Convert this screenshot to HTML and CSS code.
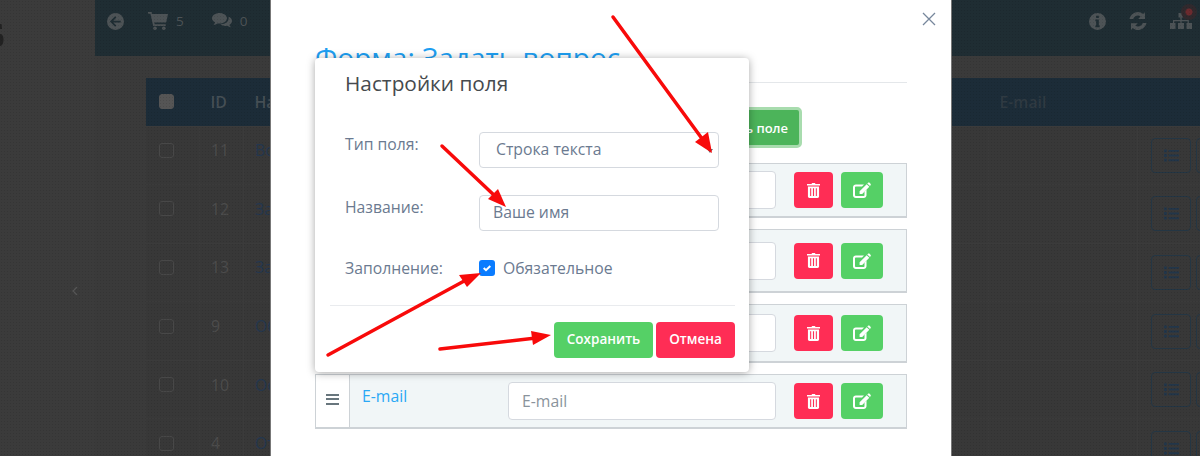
FILE: index.html
```html
<!DOCTYPE html>
<html lang="en">
<head>
  <meta charset="UTF-8">
  <meta name="viewport" content="width=device-width, initial-scale=1.0">
  <title>Форма: Задать вопрос</title>
  <link rel="stylesheet" href="styles.css">
</head>
<body>
  <svg class="defs" width="0" height="0">
    <symbol id="i-trash" viewBox="0 0 14 16">
      <path d="M4.800 1 5.500 0h3l.7 1H14v1.600H0V1zM1 3.600h12v10.800c0 .9-.7 1.600-1.600 1.600H2.600C1.700 16 1 15.300 1 14.400zM3.400 5.600v8.400h1.100V5.600zm3 0v8.400h1.200V5.600zm3.100 0v8.400h1.100V5.600z" fill-rule="evenodd"/>
    </symbol>
    <symbol id="i-edit" viewBox="0 0 18 16">
      <path d="M2.800 2.500h8.200L9 4.500H2.800c-.5 0-.8.300-.8.800v7.900c0 .5.300.8.800.8h7.900c.5 0 .8-.3.800-.8V9.500l2-2v5.700c0 1.500-1.300 2.800-2.800 2.800H2.800C1.300 16 0 14.700 0 13.200V5.300C0 3.800 1.300 2.500 2.800 2.500z"/>
      <path d="M13.700 2.200 16.300 4.800 9.200 11.900H6.600V9.300zM15 .8c.5-.5 1.100-.5 1.600 0l.9.900c.5.500.5 1.100 0 1.600l-.5.800-2.700-2.700z"/>
    </symbol>
    <symbol id="i-list" viewBox="0 0 16 13">
      <path d="M0 0h3v3H0zM5 .5h11v2H5zM0 5h3v3H0zM5 5.500h11v2H5zM0 10h3v3H0zM5 10.500h11v2H5z"/>
    </symbol>
  </svg>

  <div class="page">
    <aside class="sidebar">
      <svg class="sidebar-logo" viewBox="0 0 4 22" width="4" height="22"><path d="M0 0h1.500L2 5H0zM0 10c2.500 0 3.500 2.500 3.500 5.500S2.500 22 0 22z" fill="#222"/></svg>
      <svg class="sidebar-toggle" viewBox="0 0 6 10" width="6" height="10"><path d="M5 1 1 5l4 4" fill="none" stroke="#555" stroke-width="1.300"/></svg>
    </aside>
    <main class="main">
      <header class="topbar">
        <div class="topbar-group">
          <svg class="top-icon" viewBox="0 0 18 18" width="17" height="17"><path fill-rule="evenodd" d="M9 0a9 9 0 1 1 0 18A9 9 0 0 1 9 0zm-.4 3.500L3.100 9l5.500 5.500 1.300-1.300-3.200-3.200h7.800V8.100H6.700l3.200-3.300z"/></svg>
          <span class="top-item">
            <svg class="top-icon" viewBox="0 0 20 18" width="20" height="18"><path d="M0 0h3.600l.6 2H20l-1.800 8.500H6.300l.4 1.800h11v1.700H5.200L2.400 1.800H0z"/><circle cx="7" cy="16.200" r="1.800"/><circle cx="15.800" cy="16.200" r="1.800"/></svg>
            <span class="top-count">5</span>
          </span>
          <span class="top-item">
            <svg class="top-icon" viewBox="0 0 20 16" width="20" height="16"><path d="M7.500 0C11.600 0 15 2.400 15 5.300s-3.400 5.300-7.500 5.300c-.7 0-1.400-.1-2-.2C4.400 11.200 3 11.800 1.500 12c.7-.8 1.300-1.700 1.500-2.700C1.200 8.300 0 6.900 0 5.300 0 2.400 3.400 0 7.500 0z"/><path d="M16.300 3.600C18.500 4.500 20 6.100 20 8c0 1.500-.9 2.800-2.500 3.700.2 1 .8 1.800 1.400 2.500-1.300-.2-2.500-.7-3.500-1.500-.6.100-1.200.2-1.900.2-2 0-3.800-.7-5-1.700 4.700.2 8.800-2.200 8.100-7.600z"/></svg>
            <span class="top-count">0</span>
          </span>
        </div>
        <div class="topbar-group topbar-right">
          <svg class="top-icon" viewBox="0 0 18 18" width="17" height="17"><path fill-rule="evenodd" d="M9 0a9 9 0 1 1 0 18A9 9 0 0 1 9 0zM7.600 2.800v2.600h2.800V2.800zM6.700 7v1.700h.9v4.500h-.9V15h4.600v-1.800h-.9V7z"/></svg>
          <svg class="top-icon" viewBox="0 0 18 18" width="18" height="18"><path d="M9 0c2 0 3.800.8 5.100 2L16 .2V7h-6.800l2.300-2.400C10.700 3.900 9.900 3.500 9 3.500 6.900 3.500 5 4.800 4.200 7H.5C1.400 3 4.900 0 9 0zM2 18v-6.800h6.800l-2.300 2.400c.8.700 1.600 1 2.500 1 2.100 0 4-1.300 4.800-3.500h3.700c-.9 4-4.400 7-8.500 7-2 0-3.800-.8-5.100-2z"/></svg>
          <span class="notify">
            <svg class="top-icon" viewBox="0 0 22 16" width="22" height="16"><path d="M8.500 0h5v4.500H11.700V7h7.100v3H22v6h-5.500v-6h1.100V8.300h-6v1.700H14v6H8v-6h2.300V8.300h-6V10h1.200v6H0v-6h3V7h7.300V4.500H8.500z"/></svg>
            <span class="notify-dot"></span>
          </span>
        </div>
      </header>
      <table class="grid">
        <thead>
          <tr>
            <th class="col-check"><span class="box box-head"></span></th>
            <th class="col-id">ID</th>
            <th class="col-name">Название</th>
            <th class="col-mail">E-mail</th>
            <th></th>
          </tr>
        </thead>
        <tbody>
          <tr><td><span class="box"></span></td><td>11</td><td class="link">Вопрос</td><td></td><td class="cell-actions"><span class="btn-pair"><span class="btn-outline"><svg class="list-icon"><use href="#i-list"/></svg></span><span class="btn-outline"></span></span></td></tr>
          <tr><td><span class="box"></span></td><td>12</td><td class="link">Заказ</td><td></td><td class="cell-actions"><span class="btn-pair"><span class="btn-outline"><svg class="list-icon"><use href="#i-list"/></svg></span><span class="btn-outline"></span></span></td></tr>
          <tr><td><span class="box"></span></td><td>13</td><td class="link">Заявка</td><td></td><td class="cell-actions"><span class="btn-pair"><span class="btn-outline"><svg class="list-icon"><use href="#i-list"/></svg></span><span class="btn-outline"></span></span></td></tr>
          <tr><td><span class="box"></span></td><td>9</td><td class="link">Обзор</td><td></td><td class="cell-actions"><span class="btn-pair"><span class="btn-outline"><svg class="list-icon"><use href="#i-list"/></svg></span><span class="btn-outline"></span></span></td></tr>
          <tr><td><span class="box"></span></td><td>10</td><td class="link">Оставить</td><td></td><td class="cell-actions"><span class="btn-pair"><span class="btn-outline"><svg class="list-icon"><use href="#i-list"/></svg></span><span class="btn-outline"></span></span></td></tr>
          <tr><td><span class="box"></span></td><td>4</td><td class="link">Отклик</td><td></td><td class="cell-actions"><span class="btn-pair"><span class="btn-outline"><svg class="list-icon"><use href="#i-list"/></svg></span><span class="btn-outline"></span></span></td></tr>
        </tbody>
      </table>
    </main>
  </div>
  <div class="backdrop"></div>

  <section class="modal">
    <svg class="modal-close" viewBox="0 0 14 14" width="14" height="14"><path d="M1 1l12 12M13 1 1 13" fill="none" stroke="#77879c" stroke-width="1.300"/></svg>
    <h1 class="modal-title">Форма: Задать вопрос</h1>
    <div class="modal-toolbar">
      <button class="btn-add">Добавить поле</button>
    </div>
    <div class="fields">
      <div class="field field-a">
        <span class="field-handle"><span class="bars"></span></span>
        <span class="field-name">Ваше имя</span>
        <input class="field-input" placeholder="Ваше имя">
        <span class="field-actions">
          <span class="btn-icon btn-red"><svg class="trash"><use href="#i-trash"/></svg></span>
          <span class="btn-icon btn-green"><svg class="pen"><use href="#i-edit"/></svg></span>
        </span>
      </div>
      <div class="field field-b">
        <span class="field-handle"><span class="bars"></span></span>
        <span class="field-name">Телефон</span>
        <input class="field-input" placeholder="Телефон">
        <span class="field-actions">
          <span class="btn-icon btn-red"><svg class="trash"><use href="#i-trash"/></svg></span>
          <span class="btn-icon btn-green"><svg class="pen"><use href="#i-edit"/></svg></span>
        </span>
      </div>
      <div class="field field-c">
        <span class="field-handle"><span class="bars"></span></span>
        <span class="field-name">Вопрос</span>
        <input class="field-input" placeholder="Вопрос">
        <span class="field-actions">
          <span class="btn-icon btn-red"><svg class="trash"><use href="#i-trash"/></svg></span>
          <span class="btn-icon btn-green"><svg class="pen"><use href="#i-edit"/></svg></span>
        </span>
      </div>
      <div class="field field-a">
        <span class="field-handle"><span class="bars"></span></span>
        <span class="field-name">E-mail</span>
        <input class="field-input" placeholder="E-mail">
        <span class="field-actions">
          <span class="btn-icon btn-red"><svg class="trash"><use href="#i-trash"/></svg></span>
          <span class="btn-icon btn-green"><svg class="pen"><use href="#i-edit"/></svg></span>
        </span>
      </div>
    </div>
  </section>

  <section class="dialog">
    <h2 class="dialog-title">Настройки поля</h2>
    <div class="dialog-body">
      <div class="dialog-row">
        <label class="dialog-label">Тип поля:</label>
        <div class="select">Строка текста<span class="select-caret"></span></div>
      </div>
      <div class="dialog-row">
        <label class="dialog-label">Название:</label>
        <input class="dialog-input" value="Ваше имя">
      </div>
      <div class="dialog-row dialog-row-check">
        <label class="dialog-label">Заполнение:</label>
        <span class="check">
          <svg viewBox="0 0 16 16" width="16" height="16"><rect width="16" height="16" rx="3" fill="#0a7cff"/><path d="M4.700 8 7 10.200 11.300 6" fill="none" stroke="#fff" stroke-width="2"/></svg>
          Обязательное
        </span>
      </div>
    </div>
    <div class="dialog-footer">
      <button class="btn btn-save">Сохранить</button>
      <button class="btn btn-cancel">Отмена</button>
    </div>
  </section>

  <!-- arrows drawn over the screenshot -->
  <svg class="arrows" viewBox="0 0 1200 456" width="1200" height="456">
    <g fill="none" stroke="#f80a0a" stroke-width="3.500" stroke-linecap="round">
      <path d="M613 17 703 140"/>
      <path d="M442 146 496 197"/>
      <path d="M328 355 466 280"/>
      <path d="M440 349 536 338"/>
    </g>
    <g fill="#f80a0a">
      <path d="M712 153 695 142 708 132z"/>
      <path d="M506 207 488 199 498 189z"/>
      <path d="M481 273 467 287 459 275z"/>
      <path d="M551 335 533 345 531 331z"/>
    </g>
  </svg>
</body>
</html>
```

FILE: styles.css
```css
* {
  box-sizing: border-box;
}

body {
  margin: 0;
  width: 1200px;
  height: 456px;
  overflow: hidden;
  position: relative;
  font-family: "Open Sans", sans-serif;
  background: #3a3a3a;
}

.defs {
  position: absolute;
}

.page {
  display: flex;
  height: 456px;
  overflow: hidden;
}

/* dimmed page behind the modal */
.sidebar {
  width: 95px;
  flex: none;
  background: #3b3b3b;
  padding-top: 286px;
  padding-left: 72px;
  position: relative;
}
.sidebar-logo {
  position: absolute;
  left: 0;
  top: 24px;
}
.sidebar-toggle {
  display: block;
}
.main {
  flex: 1;
  min-width: 0;
}
.topbar {
  height: 56px;
  background: #1f2d33;
  display: flex;
  justify-content: space-between;
  align-items: center;
  padding: 0 8px 14px 12px;
}
.topbar-group {
  display: flex;
  align-items: center;
  gap: 24px;
}
.topbar-right {
  gap: 23px;
}
.top-item {
  display: flex;
  align-items: center;
  gap: 8px;
}
.top-item + .top-item {
  margin-left: 4px;
}
.top-icon {
  fill: #4d5356;
  display: block;
}
.top-count {
  font-size: 13.500px;
  color: #4d5356;
}
.notify {
  position: relative;
}
.notify-dot {
  position: absolute;
  right: -5px;
  top: -9px;
  width: 16px;
  height: 16px;
  border-radius: 50%;
  background: radial-gradient(circle, #6b2a2e 0 3px, #30292d 4px);
}
.grid {
  margin: 22px 0 0 50px;
  width: 1150px;
  table-layout: fixed;
  border-collapse: collapse;
  font-size: 15.750px;
  color: #4c4c4c;
}
.grid thead tr {
  height: 48px;
  background: #1c2c38;
}
.grid th {
  text-align: left;
  font-weight: 600;
  color: #454f55;
  padding: 0 0 0 11px;
}
.grid th.col-check {
  padding-left: 13px;
  width: 54px;
}
.grid th.col-id {
  width: 44px;
}
.grid th.col-name {
  width: 745px;
}
.grid th.col-mail {
  width: 149px;
  color: #2f3a42;
}
.grid tbody tr {
  height: 58.600px;
  background: #383838;
}
.grid td {
  border: 1px solid #3b3b3b;
  padding: 0 0 10px 11px;
}
.grid td:first-child {
  padding-left: 13px;
}
.grid td.link {
  color: #24374f;
}
.grid td.cell-actions {
  padding: 0 0 0 13px;
}
.box {
  display: block;
  width: 15px;
  height: 15px;
  border: 1px solid #484848;
  border-radius: 3px;
}
.box-head {
  background: #555;
  border-color: #555;
}
.btn-pair {
  display: flex;
  gap: 5px;
}
.btn-outline {
  flex: none;
  width: 40px;
  height: 35px;
  border: 1px solid #243644;
  border-radius: 4px;
  display: flex;
  align-items: center;
  justify-content: center;
}
.list-icon {
  width: 15px;
  height: 13px;
  fill: #22364a;
}
.backdrop {
  position: absolute;
  inset: 0;
  background-image: radial-gradient(rgba(0, 0, 0, 0.1) 1px, transparent 1px);
  background-size: 3px 3px;
}

/* form modal */
.modal {
  position: absolute;
  left: 271px;
  top: 0;
  width: 680px;
  height: 456px;
  background: #fff;
  box-shadow: 0 0 0 1px #777;
  padding: 43px 44px 0;
}
.modal-close {
  position: absolute;
  right: 15px;
  top: 12px;
}
.modal-title {
  margin: 0;
  height: 40px;
  border-bottom: 1px solid #e4e7ea;
  font-size: 28px;
  line-height: 28px;
  font-weight: 400;
  color: #1e9ff2;
}
.modal-toolbar {
  display: flex;
  justify-content: flex-end;
  margin: 24px 105px 15px 0;
}
.btn-add {
  height: 41px;
  padding: 0 11px;
  background: #4cb45a;
  border: 3px solid #a8dcae;
  border-radius: 5px;
  color: #fff;
  font-family: inherit;
  font-size: 13px;
  font-weight: 600;
}
.fields {
  display: flex;
  flex-direction: column;
  gap: 11px;
}
.field {
  display: flex;
  align-items: center;
  background: #f1f6f7;
  border: 1px solid #cdd2d6;
  border-bottom-width: 2px;
}
.field-a {
  height: 55px;
}
.field-b {
  height: 64px;
}
.field-c {
  height: 59px;
}
.field-handle {
  align-self: stretch;
  width: 34px;
  background: #fff;
  border-right: 1px solid #cdd2d6;
  display: flex;
  align-items: center;
  justify-content: center;
  padding-bottom: 4px;
}
.bars {
  display: block;
  width: 13px;
  height: 11px;
  border-top: 2px solid #68767d;
  border-bottom: 2px solid #68767d;
  position: relative;
}
.bars::after {
  content: "";
  position: absolute;
  left: 0;
  right: 0;
  top: 2.500px;
  height: 2px;
  background: #68767d;
}
.field-name {
  width: 158px;
  padding: 0 0 10px 12px;
  font-size: 15.750px;
  color: #2aa8f5;
}
.field-input {
  width: 268px;
  height: 38px;
  border: 1px solid #d5d9df;
  border-radius: 4px;
  background: #fff;
  padding: 0 13px;
  font-family: inherit;
  font-size: 15.750px;
}
.field-input::placeholder {
  color: #8a939c;
  opacity: 1;
}
.field-actions {
  display: flex;
  gap: 8px;
  margin-left: 18px;
}
.btn-icon {
  height: 36px;
  border-radius: 4px;
  display: flex;
  align-items: center;
  justify-content: center;
}
.btn-red {
  width: 39px;
  background: #ff2d55;
}
.btn-green {
  width: 42px;
  background: #55d066;
}
.trash {
  width: 13px;
  height: 15px;
  fill: #fff;
}
.pen {
  width: 18px;
  height: 16px;
  fill: #fff;
}

/* field settings popup */
.dialog {
  position: absolute;
  left: 315px;
  top: 58px;
  width: 434px;
  height: 314px;
  background: #fff;
  border-radius: 4px;
  box-shadow: 0 1px 8px rgba(0, 0, 0, 0.35);
  padding: 11px 14px 0 15px;
}
.dialog-title {
  margin: 0 0 0 15px;
  font-size: 20.800px;
  line-height: 28px;
  font-weight: 400;
  color: #464a4e;
}
.dialog-body {
  margin-top: 35px;
  display: flex;
  flex-direction: column;
  gap: 27px;
  padding: 0 15px;
}
.dialog-row {
  display: flex;
  align-items: flex-start;
  height: 36px;
}
.dialog-row-check {
  height: 20px;
  align-items: center;
}
.dialog-label {
  width: 134px;
  flex: none;
  font-size: 15.750px;
  line-height: 24px;
  color: #6b7a90;
}
.select,
.dialog-input {
  width: 240px;
  height: 36px;
  border: 1px solid #d5d9df;
  border-radius: 4px;
  background: #fff;
  font-family: inherit;
  font-size: 15.750px;
  color: #6b7a90;
}
.select {
  position: relative;
  padding-left: 16px;
  line-height: 33px;
}
.select-caret {
  position: absolute;
  right: 5px;
  top: 16px;
  border: 3px solid transparent;
  border-top: 4px solid #5d6a75;
}
.dialog-input {
  padding: 0 13px 2px;
}
.check {
  display: flex;
  align-items: center;
  gap: 8px;
  font-size: 15.750px;
  color: #6b7a90;
}
.dialog-footer {
  margin-top: 27px;
  border-top: 1px solid #e9ebee;
  padding-top: 16px;
  display: flex;
  justify-content: flex-end;
  gap: 3px;
}
.btn {
  height: 36px;
  border: 0;
  border-radius: 4px;
  color: #fff;
  font-family: inherit;
  font-size: 13.500px;
  font-weight: 600;
  padding: 0 0 2px;
}
.btn-save {
  width: 99px;
  background: #55d066;
}
.btn-cancel {
  width: 79px;
  background: #ff2d55;
}

.arrows {
  position: absolute;
  left: 0;
  top: 0;
  pointer-events: none;
}
```
